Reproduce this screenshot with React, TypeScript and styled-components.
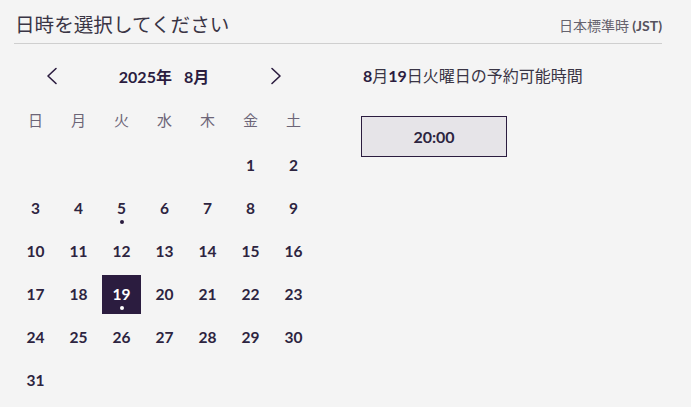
import React from "react";
import styled, { createGlobalStyle } from "styled-components";

const GlobalStyle = createGlobalStyle`
  body {
    margin: 0;
    background: #f4f4f4;
    font-family: "Lato", "Noto Sans CJK JP", sans-serif;
    color: #2d2440;
  }
`;

const INK = "#2b1c3f";

type Day = { n: number; dot?: boolean; selected?: boolean } | null;

const weekdays = ["日", "月", "火", "水", "木", "金", "土"];

function buildDays(): Day[] {
  const days: Day[] = [null, null, null, null, null];
  for (let n = 1; n <= 31; n++) {
    days.push({ n, dot: n === 5 || n === 19, selected: n === 19 });
  }
  return days;
}

function Chevron({ dir }: { dir: "left" | "right" }) {
  return (
    <svg width="12" height="18" viewBox="0 0 12 18" fill="none">
      <polyline
        points={dir === "left" ? "10,1.5 2,9 10,16.5" : "2,1.5 10,9 2,16.5"}
        stroke={INK}
        strokeWidth="1.6"
        strokeLinecap="round"
        strokeLinejoin="round"
      />
    </svg>
  );
}

export default function App() {
  const days = buildDays();
  return (
    <Page>
      <GlobalStyle />
      <Header>
        <Title>日時を選択してください</Title>
        <Zone>
          日本標準時 <b>(JST)</b>
        </Zone>
      </Header>
      <Body>
        <Calendar>
          <Nav>
            <NavButton>
              <Chevron dir="left" />
            </NavButton>
            <MonthLabel>
              2025年<Gap />8月
            </MonthLabel>
            <NavButton>
              <Chevron dir="right" />
            </NavButton>
          </Nav>
          <WeekRow>
            {weekdays.map((w) => (
              <WeekCell key={w}>{w}</WeekCell>
            ))}
          </WeekRow>
          <DaysGrid>
            {days.map((d, i) =>
              d ? (
                <DayCell key={i} $selected={!!d.selected}>
                  {d.n}
                  {d.dot && <Dot $selected={!!d.selected} />}
                </DayCell>
              ) : (
                <span key={i} />
              )
            )}
          </DaysGrid>
        </Calendar>
        <Slots>
          <SlotTitle>
            <b>8</b>月<b>19</b>日火曜日の予約可能時間
          </SlotTitle>
          <SlotButton>20:00</SlotButton>
        </Slots>
      </Body>
    </Page>
  );
}

const Page = styled.div`
  padding: 11px 29px 0 14px;
`;

const Header = styled.div`
  display: flex;
  justify-content: space-between;
  align-items: flex-end;
  padding: 0 0 7px 1px;
  border-bottom: 1px solid #cfcfcf;
`;

const Title = styled.h1`
  margin: 0;
  font-family: "Noto Sans CJK JP", sans-serif;
  font-size: 19.6px;
  font-weight: 400;
  line-height: 25px;
  color: #3a3545;
`;

const Zone = styled.div`
  font-family: "Noto Sans CJK JP", sans-serif;
  font-size: 14px;
  line-height: 20px;
  color: #66636e;
  margin-bottom: 0;

  b {
    font-family: "Lato", sans-serif;
    font-weight: 700;
    color: #55525d;
  }
`;

const Body = styled.div`
  display: flex;
  align-items: flex-start;
`;

const Calendar = styled.div`
  width: 301px;
  margin-top: 17px;
`;

const Nav = styled.div`
  display: flex;
  align-items: center;
  justify-content: space-between;
  height: 30px;
  padding: 0 33px 0 32px;
`;

const NavButton = styled.button`
  display: flex;
  align-items: center;
  justify-content: center;
  width: 12px;
  height: 30px;
  padding: 0;
  border: none;
  background: transparent;
`;

const MonthLabel = styled.div`
  font-family: "Lato", "Noto Sans CJK JP", sans-serif;
  font-weight: 700;
  font-size: 16px;
  color: ${INK};
  display: flex;
  align-items: center;
`;

const Gap = styled.span`
  display: inline-block;
  width: 12px;
`;

const WeekRow = styled.div`
  display: grid;
  grid-template-columns: repeat(7, 43px);
  margin-top: 10px;
  height: 36px;
`;

const WeekCell = styled.div`
  display: flex;
  align-items: center;
  justify-content: center;
  font-family: "Noto Sans CJK JP", sans-serif;
  font-size: 15px;
  color: #6c6577;
`;

const DaysGrid = styled.div`
  display: grid;
  grid-template-columns: repeat(7, 43px);
  grid-auto-rows: 43px;
  margin-top: 7px;
`;

const DayCell = styled.div<{ $selected: boolean }>`
  position: relative;
  margin: 2px;
  display: flex;
  align-items: center;
  justify-content: center;
  font-family: "Lato", sans-serif;
  font-weight: 700;
  font-size: 15.5px;
  padding-bottom: 2px;
  box-sizing: border-box;
  color: ${(p) => (p.$selected ? "#ffffff" : "#2d2440")};
  background: ${(p) => (p.$selected ? INK : "transparent")};
`;

const Dot = styled.span<{ $selected: boolean }>`
  position: absolute;
  left: 50%;
  bottom: 4px;
  width: 4px;
  height: 4px;
  margin-left: -2px;
  border-radius: 50%;
  background: ${(p) => (p.$selected ? "#ffffff" : INK)};
`;

const Slots = styled.div`
  margin-left: 46px;
  margin-top: 21px;
  display: flex;
  flex-direction: column;
  align-items: flex-start;
`;

const SlotTitle = styled.div`
  margin-left: 2px;
  font-family: "Noto Sans CJK JP", sans-serif;
  font-size: 16px;
  line-height: 20px;
  color: #3a3545;

  b {
    font-family: "Lato", sans-serif;
    font-weight: 700;
    color: ${INK};
  }
`;

const SlotButton = styled.button`
  margin-top: 30px;
  width: 146px;
  height: 41px;
  border: 1px solid ${INK};
  background: #e6e4e8;
  font-family: "Lato", sans-serif;
  font-weight: 700;
  font-size: 16px;
  color: #2d2440;
  padding: 0;
`;
